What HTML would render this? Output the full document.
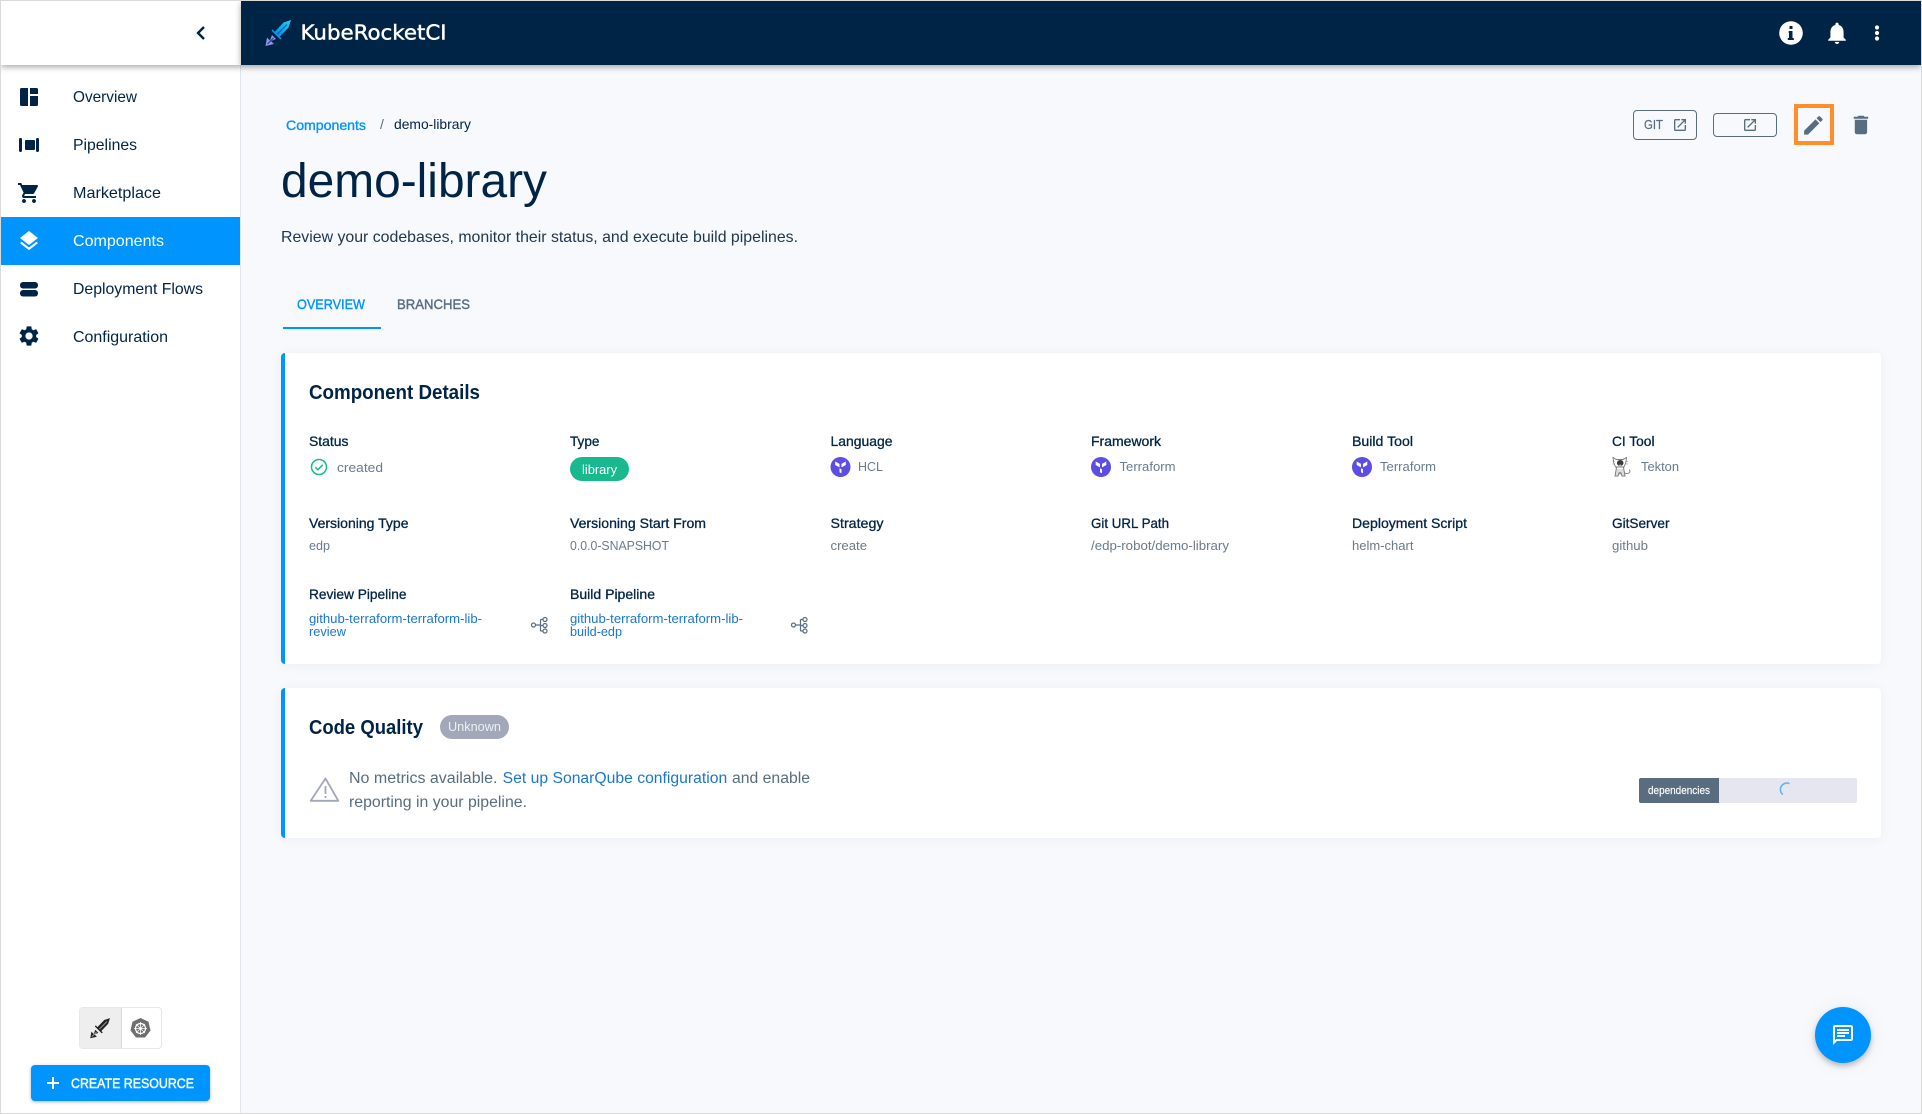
<!DOCTYPE html>
<html lang="en">
<head>
<meta charset="utf-8">
<title>demo-library - KubeRocketCI</title>
<style>
html,body{margin:0;padding:0;width:1922px;height:1114px;overflow:hidden;background:#f7f9fd;font-family:"Liberation Sans",sans-serif}
.abs{position:absolute}
#frame{left:0;top:0;width:1920px;height:1112px;border:1px solid #dadada;z-index:50;pointer-events:none}
#side{left:1px;top:1px;width:239px;height:1112px;background:#fff;border-right:1px solid #e3e5ee}
#sidehead{left:1px;top:1px;width:240px;height:64px;background:#fff;box-shadow:0 2px 6px rgba(0,0,0,.35);z-index:3}
#bar{left:241px;top:1px;width:1680px;height:64px;background:#002446;box-shadow:0 2px 6px rgba(0,0,0,.35);z-index:3}
#active{left:1px;top:217px;width:239px;height:48px;background:#0094ff}
.card{left:281px;width:1600px;background:#fff;border-radius:4px;box-sizing:border-box;border-left:4px solid #0094ff;box-shadow:0 1px 12px rgba(0,20,80,.05)}
.btn{border:1px solid #596d80;border-radius:4px;box-sizing:border-box}
#ov{left:0;top:0;z-index:10}
text{font-family:"Liberation Sans",sans-serif}
.nav{font-size:16px;fill:#002446}
.lbl{font-size:14px;fill:#002446;stroke:#002446;stroke-width:.3}
.val{font-size:13px;fill:#6a7b8c}
.lnk{font-size:13px;fill:#1976d2}
.h{font-size:20px;font-weight:bold;fill:#002446}
.p{font-size:15.5px;fill:#596d80}
</style>
</head>
<body>
<div class="abs" id="side"></div>
<div class="abs" id="active"></div>
<div class="abs" id="sidehead"></div>
<div class="abs" id="bar"></div>
<div class="abs card" style="top:353px;height:311px"></div>
<div class="abs card" style="top:688px;height:150px"></div>
<div class="abs btn" style="left:1633px;top:110px;width:64px;height:30px"></div>
<div class="abs btn" style="left:1713px;top:113px;width:64px;height:24px"></div>
<div class="abs" style="left:1794px;top:104px;width:32px;height:33px;border:4px solid #ff8e2b"></div>
<div class="abs" style="left:283px;top:327px;width:98px;height:2px;background:#0094ff"></div>
<div class="abs" style="left:570px;top:457px;width:59px;height:24px;border-radius:12px;background:#18b98f"></div>
<div class="abs" style="left:440px;top:715px;width:69px;height:24px;border-radius:12px;background:#a2a7b9"></div>
<div class="abs" style="left:1639px;top:778px;width:218px;height:25px;border-radius:2px;background:#e6e6f0;overflow:hidden"><div style="width:80px;height:25px;background:#5a6d80"></div></div>
<div class="abs" style="left:1815px;top:1007px;width:56px;height:56px;border-radius:50%;background:#0094ff;box-shadow:0 3px 6px rgba(0,0,0,.25),0 0 24px rgba(0,20,80,.05)"></div>
<div class="abs" style="left:31px;top:1065px;width:179px;height:36px;border-radius:4px;background:#0094ff;box-shadow:0 1px 3px rgba(0,0,0,.3)"></div>
<div class="abs" style="left:79px;top:1007px;width:83px;height:42px;border:1px solid #e8e8e8;border-radius:4px;box-sizing:border-box;overflow:hidden"><div style="width:41px;height:40px;background:#eee;border-right:1px solid #d8d8d8"></div></div>
<div class="abs" id="frame"></div>

<svg class="abs" id="ov" width="1922" height="1114" viewBox="0 0 1922 1114" xmlns="http://www.w3.org/2000/svg">
<defs>
<linearGradient id="lg" x1="1" y1="0" x2="0" y2="1"><stop offset="0" stop-color="#1fd6f5"/><stop offset="1" stop-color="#0a7be8"/></linearGradient>
</defs>

<!-- sidebar -->
<polyline points="204,27 198,33 204,39" fill="none" stroke="#002446" stroke-width="2.4"/>
<g fill="#002446">
<path d="M21.500 88H28v18h-6.500a1.500 1.500 0 0 1-1.500-1.500v-15a1.500 1.500 0 0 1 1.500-1.500zM30 88h6.500a1.500 1.500 0 0 1 1.500 1.500V94h-8zM30 96h8v8.500a1.500 1.500 0 0 1-1.500 1.500H30z"/>
<rect x="19" y="138" width="3" height="14" rx="1.200"/><rect x="25" y="140" width="10" height="10" rx="1"/><rect x="36" y="138" width="3" height="14" rx="1.200"/>
<g transform="translate(17,181)"><path d="M7 18c-1.100 0-1.990.9-1.990 2S5.900 22 7 22s2-.9 2-2-.9-2-2-2zM1 2v2h2l3.600 7.590-1.350 2.450c-.16.28-.25.61-.25.96 0 1.100.9 2 2 2h12v-2H7.420c-.14 0-.25-.11-.25-.25l.03-.12.9-1.630h7.450c.75 0 1.410-.41 1.750-1.030l3.580-6.490c.08-.14.12-.31.12-.48 0-.55-.45-1-1-1H5.210l-.94-2H1zm16 16c-1.100 0-1.990.9-1.990 2s.89 2 1.990 2 2-.9 2-2-.9-2-2-2z"/></g>
<rect x="20" y="282" width="18" height="6.500" rx="3"/><rect x="20" y="290" width="18" height="6.500" rx="3"/>
<g transform="translate(17,324)"><path d="M19.140 12.940c.04-.3.06-.61.06-.94 0-.32-.02-.64-.07-.94l2.030-1.580c.18-.14.23-.41.12-.61l-1.920-3.320c-.12-.22-.37-.29-.59-.22l-2.390.96c-.5-.38-1.030-.7-1.620-.94l-.36-2.540c-.04-.24-.24-.41-.48-.41h-3.840c-.24 0-.43.17-.47.41l-.36 2.540c-.59.24-1.130.57-1.620.94l-2.390-.96c-.22-.08-.47 0-.59.22L2.740 8.870c-.12.21-.08.47.12.61l2.030 1.580c-.05.3-.09.63-.09.94s.02.64.07.94l-2.030 1.580c-.18.14-.23.41-.12.61l1.920 3.320c.12.22.37.29.59.22l2.390-.96c.5.38 1.030.7 1.620.94l.36 2.540c.05.24.24.41.48.41h3.840c.24 0 .44-.17.47-.41l.36-2.540c.59-.24 1.130-.56 1.620-.94l2.390.96c.22.08.47 0 .59-.22l1.920-3.320c.12-.22.07-.47-.12-.61l-2.010-1.580zM12 15.600c-1.980 0-3.600-1.620-3.600-3.600s1.620-3.600 3.600-3.600 3.600 1.620 3.600 3.600-1.620 3.600-3.600 3.600z"/></g>
</g>
<g transform="translate(17,229)"><path fill="#fff" d="M11.990 18.540l-7.370-5.730L3 14.070l9 7 9-7-1.630-1.270-7.380 5.740zM12 16l7.360-5.730L21 9l-9-7-9 7 1.630 1.270L12 16z"/></g>
<text class="nav" x="73" y="102" textLength="64" lengthAdjust="spacingAndGlyphs">Overview</text>
<text class="nav" x="73" y="150" textLength="64" lengthAdjust="spacingAndGlyphs">Pipelines</text>
<text class="nav" x="73" y="198" textLength="88" lengthAdjust="spacingAndGlyphs">Marketplace</text>
<text class="nav" x="73" y="246" textLength="91" lengthAdjust="spacingAndGlyphs" style="fill:#fff">Components</text>
<text class="nav" x="73" y="294" textLength="130" lengthAdjust="spacingAndGlyphs">Deployment Flows</text>
<text class="nav" x="73" y="342" textLength="95" lengthAdjust="spacingAndGlyphs">Configuration</text>

<!-- logo -->
<path fill="url(#lg)" d="M291 20l-7.500 2.500-9 9.500 5 5 9-9.500z"/>
<path stroke="#002446" stroke-width=".8" stroke-opacity=".7" fill="none" d="M287 24.500l-10 10"/>
<path stroke="#0f9df0" stroke-width="1.500" fill="none" d="M272 30l9 9"/>
<path fill="#8d93ee" d="M265.500 46l1.500-8.500 3 3 2-5.500 4 4-5 2 3 3z"/>
<path stroke="#002446" stroke-width=".8" fill="none" d="M267.500 44l6-6"/>
<text x="300.500" y="39.500" font-size="20.500" fill="#fff" stroke="#fff" stroke-width=".45" style="font-family:'DejaVu Sans',sans-serif" textLength="146" lengthAdjust="spacingAndGlyphs">KubeRocketCI</text>

<!-- appbar icons -->
<circle cx="1791" cy="33" r="11.800" fill="#fff"/>
<path fill="#002446" d="M1789.500 26h3v3h-3zM1788.700 31h3.800v7h1.300v2h-6v-2h1.200v-5h-.3z"/>
<g transform="translate(1823.800,19.900) scale(1.100)"><path fill="#fff" d="M12 22c1.100 0 2-.9 2-2h-4c0 1.100.89 2 2 2zm6-6v-5c0-3.070-1.640-5.640-4.500-6.320V4c0-.83-.67-1.500-1.500-1.500s-1.500.67-1.500 1.500v.68C7.630 5.360 6 7.920 6 11v5l-2 2v1h16v-1l-2-2z"/></g>
<g fill="#fff"><circle cx="1877" cy="27.500" r="2.100"/><circle cx="1877" cy="33" r="2.100"/><circle cx="1877" cy="38.500" r="2.100"/></g>

<!-- breadcrumb and title -->
<text x="286" y="130" font-size="14" fill="#0094ff" stroke="#0094ff" stroke-width=".35" textLength="80" lengthAdjust="spacingAndGlyphs">Components</text>
<text x="380" y="129" font-size="14" fill="#596d80">/</text>
<text x="394" y="129" font-size="14" fill="#002446" textLength="77" lengthAdjust="spacingAndGlyphs">demo-library</text>
<text x="281" y="197" font-size="48" fill="#002446" textLength="266" lengthAdjust="spacingAndGlyphs">demo-library</text>
<text x="281" y="242" font-size="16" fill="#20384f" textLength="517" lengthAdjust="spacingAndGlyphs">Review your codebases, monitor their status, and execute build pipelines.</text>
<text x="297" y="309" font-size="14" fill="#0094ff" stroke="#0094ff" stroke-width=".4" textLength="68" lengthAdjust="spacingAndGlyphs">OVERVIEW</text>
<text x="397" y="309" font-size="14" fill="#596d80" stroke="#596d80" stroke-width=".4" textLength="73" lengthAdjust="spacingAndGlyphs">BRANCHES</text>

<!-- actions -->
<text x="1644" y="129" font-size="13" fill="#596d80" stroke="#596d80" stroke-width=".2" textLength="19" lengthAdjust="spacingAndGlyphs">GIT</text>
<g transform="translate(1672,117) scale(.667)"><path fill="#596d80" d="M19 19H5V5h7V3H5c-1.110 0-2 .9-2 2v14c0 1.100.89 2 2 2h14c1.100 0 2-.9 2-2v-7h-2v7zM14 3v2h3.590l-9.830 9.830 1.410 1.410L19 6.410V10h2V3h-7z"/></g>
<g transform="translate(1742,117) scale(.667)"><path fill="#596d80" d="M19 19H5V5h7V3H5c-1.110 0-2 .9-2 2v14c0 1.100.89 2 2 2h14c1.100 0 2-.9 2-2v-7h-2v7zM14 3v2h3.590l-9.830 9.830 1.410 1.410L19 6.410V10h2V3h-7z"/></g>
<g transform="translate(1801,113) scale(1.030)"><path fill="#596d80" d="M3 17.250V21h3.750L17.810 9.940l-3.750-3.750L3 17.250zM20.710 7.040c.39-.39.39-1.020 0-1.410l-2.340-2.340c-.39-.39-1.020-.39-1.410 0l-1.830 1.830 3.750 3.750 1.830-1.830z"/></g>
<g transform="translate(1848.600,112.600) scale(1.030)"><path fill="#596d80" d="M6 19c0 1.100.9 2 2 2h8c1.100 0 2-.9 2-2V7H6v12zM19 4h-3.500l-1-1h-5l-1 1H5v2h14V4z"/></g>

<!-- component details -->
<text class="h" x="309" y="399" textLength="171" lengthAdjust="spacingAndGlyphs">Component Details</text>
<text class="lbl" x="309" y="446" textLength="39.500" lengthAdjust="spacingAndGlyphs">Status</text>
<text class="lbl" x="570" y="446" textLength="29.500" lengthAdjust="spacingAndGlyphs">Type</text>
<text class="lbl" x="830.500" y="446" textLength="62" lengthAdjust="spacingAndGlyphs">Language</text>
<text class="lbl" x="1091" y="446" textLength="70" lengthAdjust="spacingAndGlyphs">Framework</text>
<text class="lbl" x="1352" y="446" textLength="61" lengthAdjust="spacingAndGlyphs">Build Tool</text>
<text class="lbl" x="1612" y="446" textLength="42.500" lengthAdjust="spacingAndGlyphs">CI Tool</text>

<circle cx="319" cy="467" r="7.500" fill="none" stroke="#18b98f" stroke-width="1.500"/>
<path d="M315.300 467.200l2.600 2.600 4.800-5" fill="none" stroke="#18b98f" stroke-width="1.500"/>
<text class="val" x="337" y="472" textLength="46" lengthAdjust="spacingAndGlyphs">created</text>
<text x="582" y="474" font-size="13" fill="#fff" textLength="35" lengthAdjust="spacingAndGlyphs">library</text>

<g><circle cx="840.500" cy="467" r="10" fill="#5c4ee5"/><path fill="#fff" d="M835.200 461.500l4.300 2.400v3.500l-4.300-2.400zM845.800 461.500l-4.300 2.400v3.500l4.300-2.400zM839.500 468.200l2 1.100v4l-2-1.100z"/></g>
<text class="val" x="858" y="471" textLength="25" lengthAdjust="spacingAndGlyphs">HCL</text>
<g transform="translate(260.500,0)"><circle cx="840.500" cy="467" r="10" fill="#5c4ee5"/><path fill="#fff" d="M835.200 461.500l4.300 2.400v3.500l-4.300-2.400zM845.800 461.500l-4.300 2.400v3.500l4.300-2.400zM839.500 468.200l2 1.100v4l-2-1.100z"/></g>
<text class="val" x="1119.500" y="471" textLength="56" lengthAdjust="spacingAndGlyphs">Terraform</text>
<g transform="translate(521.500,0)"><circle cx="840.500" cy="467" r="10" fill="#5c4ee5"/><path fill="#fff" d="M835.200 461.500l4.300 2.400v3.500l-4.300-2.400zM845.800 461.500l-4.300 2.400v3.500l4.300-2.400zM839.500 468.200l2 1.100v4l-2-1.100z"/></g>
<text class="val" x="1380" y="471" textLength="56" lengthAdjust="spacingAndGlyphs">Terraform</text>
<!-- tekton cat -->
<g fill="none" stroke="#777" stroke-width=".9">
<path d="M1613 457.500l3.500 2h6.500l3.500-2-.7 5-1.800 4.500h-8.500l-1.800-4.500z"/>
<path d="M1616.500 467.500l-1.500 8.500h3l1-3h2l1 3h3l-1.500-8.500M1625 473c3 1.500 6-.5 4.500-3.500"/>
<path d="M1616 470h8M1616 472h8M1615.500 474h9" stroke-width=".6"/>
<path d="M1612.500 461l2 .5M1612.500 464l2 0M1628 461l-2 .5M1628 464h-2" stroke-width=".6"/>
</g>
<ellipse cx="1620.200" cy="463" rx="3.300" ry="3" fill="#3a3a3a"/>
<circle cx="1620.200" cy="465.500" r="1" fill="#ccc"/>
<text class="val" x="1641" y="471" textLength="38" lengthAdjust="spacingAndGlyphs">Tekton</text>

<text class="lbl" x="309" y="528" textLength="99.500" lengthAdjust="spacingAndGlyphs">Versioning Type</text>
<text class="lbl" x="570" y="528" textLength="136" lengthAdjust="spacingAndGlyphs">Versioning Start From</text>
<text class="lbl" x="830.500" y="528" textLength="53" lengthAdjust="spacingAndGlyphs">Strategy</text>
<text class="lbl" x="1091" y="528" textLength="78" lengthAdjust="spacingAndGlyphs">Git URL Path</text>
<text class="lbl" x="1352" y="528" textLength="115" lengthAdjust="spacingAndGlyphs">Deployment Script</text>
<text class="lbl" x="1612" y="528" textLength="57.500" lengthAdjust="spacingAndGlyphs">GitServer</text>
<text class="val" x="309" y="550" textLength="21" lengthAdjust="spacingAndGlyphs">edp</text>
<text class="val" x="570" y="550" textLength="99" lengthAdjust="spacingAndGlyphs">0.0.0-SNAPSHOT</text>
<text class="val" x="830.500" y="550" textLength="36.500" lengthAdjust="spacingAndGlyphs">create</text>
<text class="val" x="1091" y="550" textLength="138" lengthAdjust="spacingAndGlyphs">/edp-robot/demo-library</text>
<text class="val" x="1352" y="550" textLength="61.500" lengthAdjust="spacingAndGlyphs">helm-chart</text>
<text class="val" x="1612" y="550" textLength="36" lengthAdjust="spacingAndGlyphs">github</text>

<text class="lbl" x="309" y="599" textLength="97.500" lengthAdjust="spacingAndGlyphs">Review Pipeline</text>
<text class="lbl" x="570" y="599" textLength="85" lengthAdjust="spacingAndGlyphs">Build Pipeline</text>
<text class="lnk" x="309" y="623" textLength="173" lengthAdjust="spacingAndGlyphs">github-terraform-terraform-lib-</text>
<text class="lnk" x="309" y="636" textLength="37" lengthAdjust="spacingAndGlyphs">review</text>
<text class="lnk" x="570" y="623" textLength="173" lengthAdjust="spacingAndGlyphs">github-terraform-terraform-lib-</text>
<text class="lnk" x="570" y="636" textLength="52" lengthAdjust="spacingAndGlyphs">build-edp</text>
<g fill="#fff" stroke="#596d80" stroke-width="1.200">
<path fill="none" d="M535.500 625h5M540.500 619.500v11.500M540.500 619.500h3M540.500 625.500h3M540.500 631h3"/>
<circle cx="533.500" cy="625" r="2"/><circle cx="545" cy="619.500" r="2"/><circle cx="545" cy="625.500" r="2"/><circle cx="545" cy="631" r="2"/>
</g>
<g fill="#fff" stroke="#596d80" stroke-width="1.200" transform="translate(260,0)">
<path fill="none" d="M535.500 625h5M540.500 619.500v11.500M540.500 619.500h3M540.500 625.500h3M540.500 631h3"/>
<circle cx="533.500" cy="625" r="2"/><circle cx="545" cy="619.500" r="2"/><circle cx="545" cy="625.500" r="2"/><circle cx="545" cy="631" r="2"/>
</g>

<!-- code quality -->
<text class="h" x="309" y="734" textLength="114" lengthAdjust="spacingAndGlyphs">Code Quality</text>
<text x="448" y="731" font-size="13" fill="#eef0f4" textLength="53" lengthAdjust="spacingAndGlyphs">Unknown</text>
<path d="M325.500 778.500l12.800 22.300h-27.600z" fill="none" stroke="#a2a7b9" stroke-width="1.800" stroke-linejoin="round"/>
<path d="M325.500 786v8M325.500 796v2" stroke="#a2a7b9" stroke-width="1.800" fill="none"/>
<text class="p" x="349" y="783" textLength="148.500" lengthAdjust="spacingAndGlyphs">No metrics available.</text>
<text class="p" x="502.700" y="783" style="fill:#1976d2" textLength="224.500" lengthAdjust="spacingAndGlyphs">Set up SonarQube configuration</text>
<text class="p" x="732" y="783" textLength="78" lengthAdjust="spacingAndGlyphs">and enable</text>
<text class="p" x="349" y="807" textLength="178" lengthAdjust="spacingAndGlyphs">reporting in your pipeline.</text>
<text x="1648" y="794" font-size="11" fill="#fff" stroke="#fff" stroke-width=".15" textLength="62" lengthAdjust="spacingAndGlyphs">dependencies</text>
<path d="M1789.500 783.600a6.500 6.500 0 0 0-6.700 11" fill="none" stroke="#64b0f5" stroke-width="1.500"/>

<!-- fab -->
<g transform="translate(1831,1023)"><path fill="#fff" d="M20 2H4c-1.100 0-2 .9-2 2v18l4-4h14c1.100 0 2-.9 2-2V4c0-1.100-.9-2-2-2zm0 14H5.170L4 17.170V4h16v12zM6 6h12v2H6zm0 3h12v2H6zm0 3h8v2H6z"/></g>

<!-- bottom sidebar -->
<g transform="translate(-115.500,1002.600) scale(.775)">
<path fill="#222" d="M291 20l-7.500 2.500-9 9.500 5 5 9-9.500z"/>
<path stroke="#eee" stroke-width=".8" fill="none" d="M287 24.500l-10 10"/>
<path stroke="#222" stroke-width="1.800" fill="none" d="M272 30l9 9"/>
<path fill="#222" d="M265.500 46l1.500-8.500 3 3 2-5.500 4 4-5 2 3 3z"/>
<path stroke="#eee" stroke-width=".8" fill="none" d="M267.500 44l6-6"/>
</g>
<path fill="#6e6e6e" d="M140.500 1018l8 3.800 2 8.700-5.500 7h-9l-5.500-7 2-8.700z"/>
<circle cx="140.500" cy="1028.500" r="5" fill="none" stroke="#fff" stroke-width="1.200"/>
<path d="M140.500 1022v13M134 1028.500h13M136 1024l9 9M145 1024l-9 9" stroke="#fff" stroke-width=".8"/>
<path d="M53 1077v12M47 1083h12" stroke="#fff" stroke-width="2"/>
<text x="71" y="1088" font-size="14" fill="#fff" stroke="#fff" stroke-width=".45" textLength="123" lengthAdjust="spacingAndGlyphs">CREATE RESOURCE</text>
</svg>
</body>
</html>
